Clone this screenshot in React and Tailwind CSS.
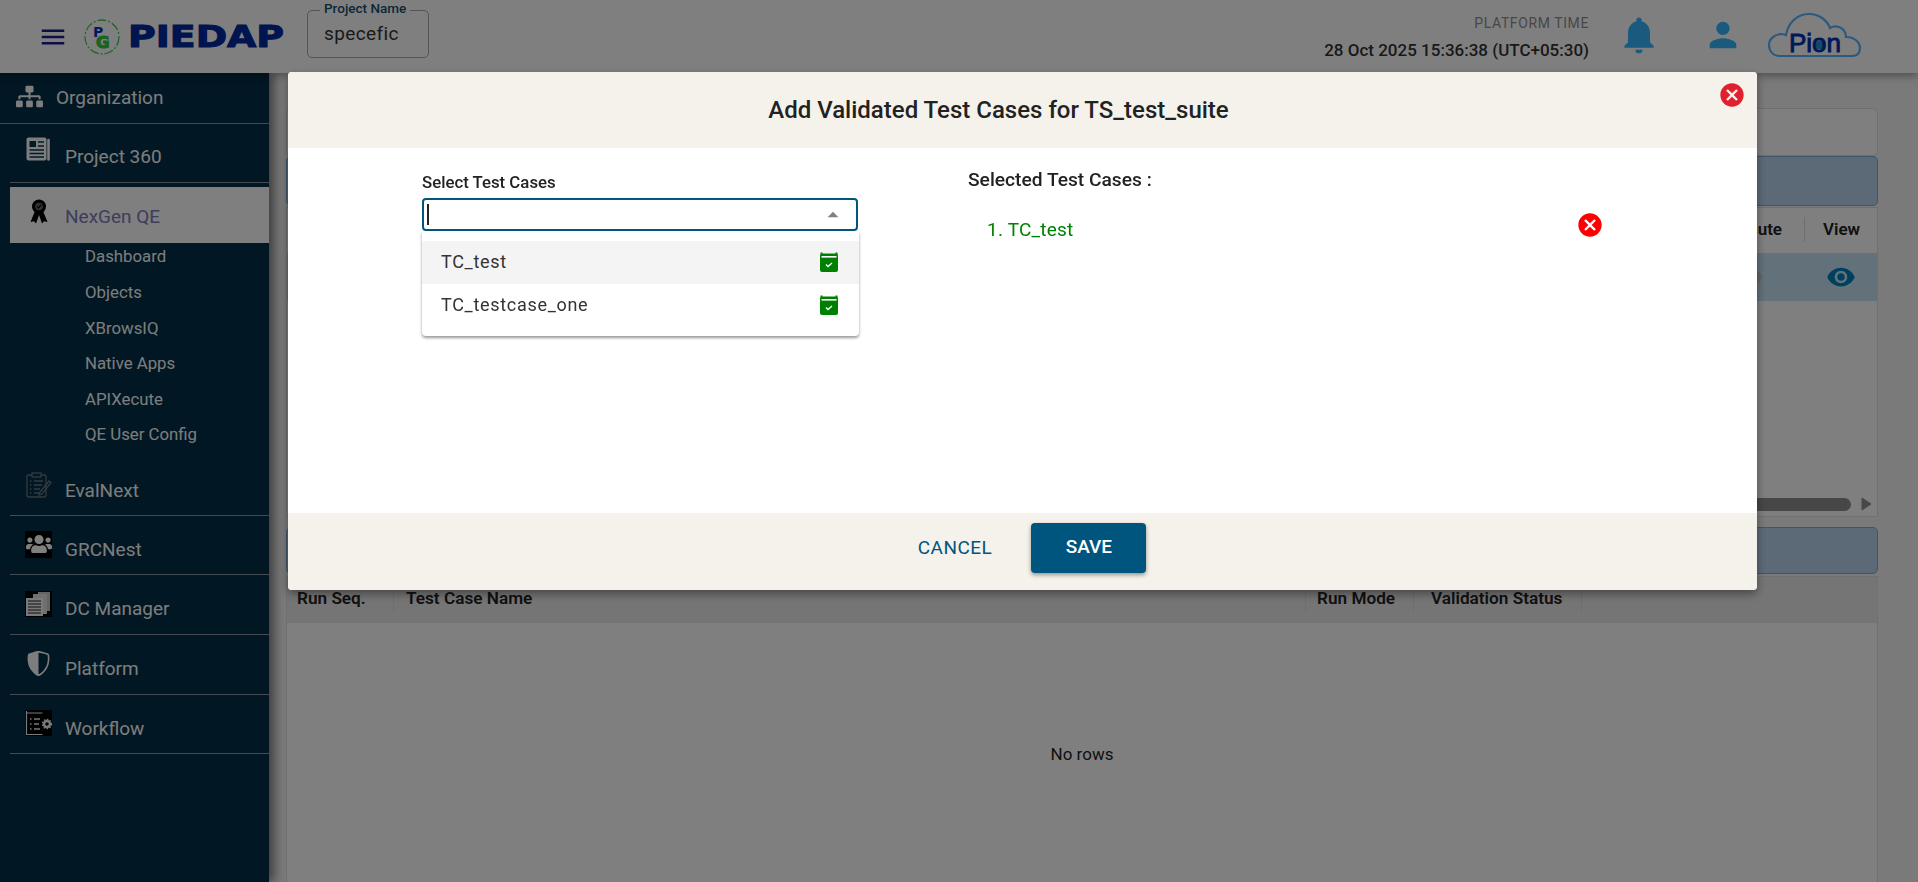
import React from 'react';
import { MdMenu, MdNotifications, MdPerson, MdCancel, MdArrowDropUp, MdVisibility } from 'react-icons/md';
import { FaSitemap, FaUsers } from 'react-icons/fa';
import { BsShieldShaded } from 'react-icons/bs';

const PaperIcon = () => (
  <svg width="25" height="24" viewBox="0 0 25 24">
    <rect x="0.5" y="0.5" width="20" height="23" rx="2" fill="#fafafa" />
    <rect x="3.5" y="4" width="6.5" height="6" fill="#03344f" />
    <path d="M12 5h6M12 9h6M3.5 13h14.5M3.5 16.5h14.5M3.5 20h14.5" stroke="#03344f" strokeWidth="1.6" />
    <path d="M22.5 3v19.5" stroke="#fafafa" strokeWidth="2.6" strokeLinecap="round" />
  </svg>
);

const BadgeIcon = () => (
  <svg width="18" height="25" viewBox="0 0 18 25" fill="none">
    <path d="M5 12 .5 23l3.5-.8L6 24.5l3-8.5 3 8.5 2-2.3 3.5.8L13 12" fill="#000" />
    <circle cx="9" cy="7.5" r="7" fill="#000" />
    <circle cx="9" cy="7.5" r="3.8" fill="#666" />
    <path d="m7.2 7.5 1.4 1.4L11 5.8" stroke="#000" strokeWidth="1.1" />
  </svg>
);

const EvalIcon = () => (
  <svg width="26" height="26" viewBox="0 0 26 26" fill="none" stroke="#69757c" strokeWidth="1.3">
    <rect x="1" y="3" width="19" height="22" rx="1.5" />
    <rect x="6" y="1" width="9" height="4" fill="#032e46" />
    <path d="M4 9h1.5M8 9h9M4 13h1.5M8 13h8M4 17h1.5M8 17h6M4 21h1.5M8 21h5" />
    <path d="m14 20 9-11 2 1.5L16 22l-3 1z" />
  </svg>
);

const UsersSquare = () => (
  <span className="flex h-[27px] w-[27px] items-center justify-center bg-black text-[26px] text-[#ffffff]">
    <FaUsers />
  </span>
);

const DocsIcon = () => (
  <svg width="27" height="26" viewBox="0 0 27 26" className="bg-black">
    <rect x="13" y="1" width="12" height="19" fill="#c8c8c8" />
    <rect x="8" y="3" width="14" height="20" fill="#e0e0e0" />
    <rect x="1" y="7" width="17" height="18" fill="#f4f4f4" />
    <path d="M3 10h13M3 13h13M3 16h13M3 19h13M3 22h13" stroke="#222" strokeWidth="1" />
  </svg>
);

const WorkflowIcon = () => (
  <svg width="27" height="26" viewBox="0 0 27 26" className="bg-black" fill="none" stroke="#f4f4f4">
    <path d="M1.5 1v23.5h16M1.5 3h16" strokeWidth="1.2" />
    <path d="M5 9h1.5M9 9h6M5 14h1.5M9 14h5M5 19h1.5M9 19h6" strokeWidth="1.5" />
    <circle cx="22" cy="14" r="3" strokeWidth="2.5" />
    <circle cx="22" cy="14" r="4.6" strokeWidth="1.2" strokeDasharray="1.6 1.4" />
  </svg>
);

const CalendarCheck = () => (
  <svg width="20" height="20" viewBox="0 0 20 20">
    <path d="M3 1.5h14a2 2 0 0 1 2 2V18a2 2 0 0 1-2 2H3a2 2 0 0 1-2-2V3.5a2 2 0 0 1 2-2z" fill="#008000" />
    <rect x="1.5" y="0.5" width="2" height="2" fill="#008000" />
    <rect x="16.5" y="0.5" width="2" height="2" fill="#008000" />
    <rect x="2.5" y="4" width="15" height="1.6" fill="#fff" />
    <path d="m7 12.5 2 2 4-3.5" stroke="#fff" strokeWidth="1.3" fill="none" />
  </svg>
);

const PgLogo = () => (
  <svg width="38" height="36" viewBox="0 0 38 36">
    <circle cx="19" cy="18" r="17" fill="none" stroke="#48c850" strokeWidth="1.3" strokeDasharray="9 2 2 2" />
    <text x="10" y="18" fontFamily="'DejaVu Sans', sans-serif" fontWeight="700" fontSize="14" fill="#0034b8">P</text>
    <text x="13" y="29" fontFamily="'DejaVu Sans', sans-serif" fontWeight="700" fontSize="16.5" fill="#34c844" stroke="#34c844" strokeWidth="1.2">G</text>
  </svg>
);

const PionLogo = () => (
  <svg width="94" height="46" viewBox="0 0 94 46" fill="none">
    <path d="M12 44C4 44 1 38 1 33c0-6 5-10 11-11 3 0 4 0 6 1C20 11 29 2 41 2c10 0 18 6 21 14 3-2 6-2 9-1 5 2 7 6 7 10 8 0 14 5 14 11 0 5-3 8-8 8z" stroke="#58b4ff" strokeWidth="2.2" />
    <circle cx="52" cy="33" r="4.5" fill="#2a90c8" />
    <text x="21" y="40" fontFamily="'Liberation Sans', sans-serif" fontSize="26" fill="#0030b0" stroke="#0030b0" strokeWidth="0.9">Pion</text>
  </svg>
);

const subItems = ['Dashboard', 'Objects', 'XBrowsIQ', 'Native Apps', 'APIXecute', 'QE User Config'];

const lowerItems = [
  { name: 'EvalNext', icon: <EvalIcon />, h: 'h-[59px]' },
  { name: 'GRCNest', icon: <UsersSquare />, h: 'h-[59px]' },
  { name: 'DC Manager', icon: <DocsIcon />, h: 'h-[60px]' },
  { name: 'Platform', icon: <BsShieldShaded className="text-[25px] text-[#fafafa]" />, h: 'h-[60px]' },
  { name: 'Workflow', icon: <WorkflowIcon />, h: 'h-[59px]' },
];

const Sidebar = () => (
  <aside className="relative z-[5] w-[269px] shrink-0 bg-[#032e46] text-[19px] text-[#fafafa] shadow-[5px_0_10px_rgba(0,0,0,0.5)]">
    <div className="flex h-[51px] items-center border-b border-[#8a92a8] pl-[16px]">
      <FaSitemap className="mb-[4px] mr-[13px] text-[27px]" />
      <span>Organization</span>
    </div>
    <div className="ml-[10px] flex h-[59px] items-center border-b border-[#8a92a8] pl-[16px]">
      <span className="mb-[8px] mr-[14px] flex"><PaperIcon /></span>
      <span className="pt-[9px]">Project 360</span>
    </div>
    <div className="ml-[10px] mt-[4px] flex h-[56px] items-center bg-[#ffffff] pl-[20px] text-[#7a7ab8]">
      <span className="mb-[8px] mr-[17px] flex"><BadgeIcon /></span>
      <span className="pt-[4px]">NexGen QE</span>
    </div>
    <div className="-mt-[4px]">
      {subItems.map((item) => (
        <div key={item} className="flex h-[35.6px] items-center pl-[85px] text-[16.8px] leading-none">{item}</div>
      ))}
    </div>
    <div className="ml-[10px] mt-[4px]">
      {lowerItems.map((item) => (
        <div key={item.name} className={`flex items-center border-b border-[#8a92a8] pl-[15px] ${item.h}`}>
          <span className="mb-[1px] mr-[13px] flex w-[27px] justify-center">{item.icon}</span>
          <span className="pt-[11px]">{item.name}</span>
        </div>
      ))}
    </div>
  </aside>
);

const Header = () => (
  <header className="relative z-10 flex h-[73px] items-center bg-white pl-[38px] pr-[56px] shadow-[0_3px_8px_rgba(0,0,0,0.35)]">
    <MdMenu className="text-[30px] text-[#1c1c8c]" />
    <div className="ml-[15px]"><PgLogo /></div>
    <span className="ml-[7px] w-[179px] origin-left scale-x-[1.22] font-['DejaVu_Sans',sans-serif] text-[31px] font-bold leading-none text-[#002aa0] [-webkit-text-stroke:1.1px_#002aa0]">PIEDAP</span>
    <fieldset className="-mt-[12px] h-[55px] w-[122px] rounded-[5px] border border-[#a8a8a8] pl-[12px]">
      <legend className="-translate-y-[2px] px-[4px] text-[13.5px] font-medium leading-[14px] text-[#17506e]">Project Name</legend>
      <div className="pl-[4px] pt-[5px] text-[19px] leading-[24px] tracking-[0.4px] text-[#333]">specefic</div>
    </fieldset>
    <div className="ml-auto text-right">
      <div className="text-[14px] leading-[20px] tracking-[0.6px] text-[#8f8f8f]">PLATFORM TIME</div>
      <div className="mt-[7px] text-[17px] font-medium leading-[20px] text-[#333]">28 Oct 2025 15:36:38 (UTC+05:30)</div>
    </div>
    <MdNotifications className="mb-[3px] ml-[28px] text-[44px] text-[#34b4ff]" />
    <MdPerson className="mb-[3px] ml-[42px] text-[40px] text-[#34b4ff]" />
    <div className="mb-[3px] ml-[25px]"><PionLogo /></div>
  </header>
);

const Main = () => (
  <main className="min-w-0 flex-1 pl-[17px] pr-[40px] pt-[35px] text-[#222]">
    <div className="h-[48px] rounded-[5px] border border-[#dedede] bg-white" />
    <div className="h-[50px] rounded-[5px] border border-[#7cacd6] bg-[#b8d4f0]" />
    <div className="mt-[1px] h-[310px] border border-[#e0e0e0] bg-white">
      <div className="flex h-[45px] items-center justify-end pb-[2px] text-[17px] font-semibold">
        <span className="border-r border-[#dcdcdc] pl-[20px] pr-[22px]">Execute</span>
        <span className="w-[72px] pl-[18px]">View</span>
      </div>
      <div className="flex h-[48px] items-center justify-end gap-[62px] bg-[#c4e2f4] pr-[21px] text-[#0080be]">
        <MdVisibility className="text-[30px] text-[#c8c8c8]" />
        <MdVisibility className="text-[30px]" />
      </div>
      <div className="flex h-[215px] items-end justify-end pb-[5px] pr-[5px]">
        <div className="mr-[10px] h-[13px] w-[300px] rounded-full bg-[#8e8e8e]" />
        <svg width="11" height="14" viewBox="0 0 11 14">
          <path d="M1 1l9 6-9 6z" fill="#8e8e8e" stroke="#8e8e8e" strokeLinejoin="round" />
        </svg>
      </div>
    </div>
    <div className="mt-[10px] h-[47px] rounded-[5px] border border-[#7cacd6] bg-[#b8d4f0]" />
    <div className="mt-[2px] h-[320px] border border-[#e0e0e0] bg-white">
      <div className="flex h-[46px] items-center bg-[#ebebeb] pb-[2px] text-[17.2px] font-semibold">
        <span className="w-[107px] border-r border-[#dcdcdc] pl-[10px]">Run Seq.</span>
        <span className="w-[912px] border-r border-[#dcdcdc] pl-[12px]">Test Case Name</span>
        <span className="w-[108px] border-r border-[#dcdcdc] pl-[11px]">Run Mode</span>
        <span className="w-[168px] border-r border-[#dcdcdc] pl-[17px]">Validation Status</span>
      </div>
      <div className="flex h-[244px] items-center justify-center pt-[20px] text-[17px]">No rows</div>
    </div>
  </main>
);

const Modal = () => (
  <div className="fixed inset-0 z-20 bg-black/50">
    <div className="absolute left-[288px] top-[72px] flex h-[518px] w-[1469px] flex-col overflow-hidden rounded-[4px] bg-white shadow-[0_4px_10px_rgba(0,0,0,0.4)]">
      <div className="relative flex h-[76px] shrink-0 items-center justify-center bg-[#f5f2eb] pr-[48px] text-[24px] font-medium text-[#222]">
        Add Validated Test Cases for TS_test_suite
        <MdCancel className="absolute right-[11px] top-[9px] text-[28px] text-[#e0202c]" />
      </div>
      <div className="flex flex-1">
        <div className="ml-[134px] w-[437px] pt-[24px]">
          <div className="text-[16.8px] font-medium leading-[20px] text-[#222]">Select Test Cases</div>
          <div className="relative mt-[6px]">
            <div className="flex h-[33px] w-[436px] items-center justify-between rounded-[4px] border-2 border-[#005581] pl-[3px] pr-[10px]">
              <span className="h-[21px] w-[2px] bg-[#222]" />
              <MdArrowDropUp className="text-[26px] text-[#808080]" />
            </div>
            <div className="absolute left-0 top-[33px] w-[437px] rounded-b-[4px] bg-white pb-[9px] pt-[10px] text-[18px] tracking-[0.7px] text-[#333] shadow-[0_2px_3px_rgba(0,0,0,0.4)]">
              <div className="flex h-[43px] items-center justify-between bg-[#f4f4f4] pb-[2px] pl-[19px] pr-[20px]">
                TC_test <CalendarCheck />
              </div>
              <div className="flex h-[43px] items-center justify-between pb-[2px] pl-[19px] pr-[20px]">
                TC_testcase_one <CalendarCheck />
              </div>
            </div>
          </div>
        </div>
        <div className="ml-[109px] w-[636px] pt-[20px]">
          <div className="text-[19.2px] font-medium leading-[24px] text-[#222]">Selected Test Cases :</div>
          <div className="mt-[19px] flex items-center justify-between pl-[19px] text-[19px] leading-[26px] tracking-[0.2px] text-[#008000]">
            <span>1. TC_test</span>
            <MdCancel className="mb-[10px] text-[28px] text-[#ff0000]" />
          </div>
        </div>
      </div>
      <div className="flex h-[77px] shrink-0 items-center justify-center bg-[#f5f2eb] pb-[8px] text-[19px]">
        <button className="-ml-[5px] px-[24px] pt-[2px] tracking-[0.5px] text-[#005581]">CANCEL</button>
        <button className="ml-[15px] h-[50px] w-[115px] rounded-[4px] bg-[#00557f] font-medium text-white shadow-[0_2px_4px_rgba(0,0,0,0.4)]">SAVE</button>
      </div>
    </div>
  </div>
);

export default function App() {
  return (
    <div className="h-screen overflow-hidden bg-[#f4f4f4] font-['Roboto',sans-serif]">
      <Header />
      <div className="flex h-[809px]">
        <Sidebar />
        <Main />
      </div>
      <Modal />
    </div>
  );
}
